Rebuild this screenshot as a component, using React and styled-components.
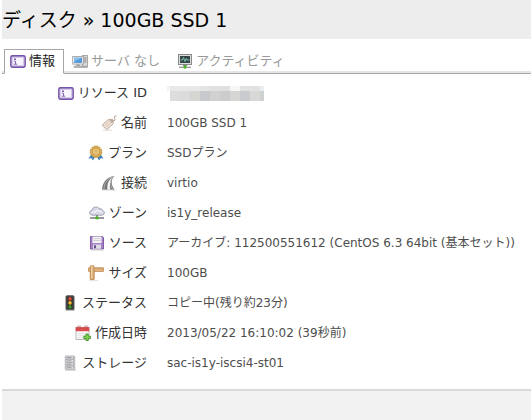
import React, { useState } from "react";
import styled, { createGlobalStyle } from "styled-components";

const GlobalStyle = createGlobalStyle`
    body {
        margin: 0;
        background: #ffffff;
        color: #333333;
        font-family: "DejaVu Sans", "Noto Sans CJK JP", sans-serif;
        font-size: 13px;
        line-height: 20px;
    }
`;

const Page = styled.div`
    display: flex;
    flex-direction: column;
    min-height: 100vh;
    padding-left: 2px;
    box-sizing: border-box;
`;

const Header = styled.header`
    padding: 5px 0 4px;
    background: #ededed;
`;

const Title = styled.h1`
    margin: 0;
    color: #000000;
    font-size: 19px;
    font-weight: 400;
    line-height: 30px;
`;

const TabBar = styled.div`
    display: flex;
    margin-top: 10px;
    padding-left: 2px;
    border-bottom: 1px solid #a6a6a6;
    box-shadow: inset 0 -2px 0 #e6e6e6;
`;

const Tab = styled.button`
    display: flex;
    align-items: center;
    gap: 3px;
    height: 25px;
    margin-bottom: -1px;
    padding: 0 8px 1px 5px;
    border: 1px solid ${({ $active }) => ($active ? "#a6a6a6" : "transparent")};
    border-bottom-color: ${({ $active }) => ($active ? "#ffffff" : "transparent")};
    background: ${({ $active }) => ($active ? "#ffffff" : "transparent")};
    color: ${({ $active }) => ($active ? "#222222" : "#999999")};
    font: inherit;
    cursor: pointer;

    & + & {
        margin-left: 2px;
    }
`;

const Details = styled.table`
    width: 100%;
    margin-top: 4px;
    border-collapse: collapse;
`;

const Label = styled.th`
    width: 145px;
    height: 30px;
    padding: 0;
    font-weight: 400;
`;

const LabelContent = styled.div`
    display: flex;
    align-items: center;
    justify-content: flex-end;
    gap: 4px;
    white-space: nowrap;
`;

const Value = styled.td`
    height: 30px;
    padding: 0 0 0 20px;
    color: #4d4d4d;
    font-size: 12px;
    white-space: nowrap;
`;

const Mosaic = styled.svg`
    display: block;
`;

const Footer = styled.footer`
    flex: 1;
    margin-top: 11px;
    border-top: 2px solid #d9d9d9;
    background: #f2f2f2;
`;

const IconSvg = styled.svg`
    flex: none;
    width: 16px;
    height: 16px;
`;

const Icon = ({ children }) => (
    <IconSvg viewBox="0 0 16 16" aria-hidden="true">
        {children}
    </IconSvg>
);

const InfoIcon = () => (
    <Icon>
        <rect x=".9" y="2.9" width="14.2" height="11.2" rx="1.5" fill="#f7f5fb" stroke="#7453a8" strokeWidth="1.6" />
        <rect x="2.2" y="4.2" width="11.6" height="8.6" rx=".5" fill="none" stroke="#b9a6da" strokeWidth=".8" />
        <circle cx="5" cy="6.2" r=".9" fill="#65429b" />
        <path d="M3.8 8.2h1.7v3M3.8 11.2h3.4" fill="none" stroke="#7d5fb0" strokeWidth=".9" />
    </Icon>
);

const ServerIcon = () => (
    <Icon>
        <rect x="10.5" y="2.5" width="5" height="11.5" fill="#d9d9d9" stroke="#999999" strokeWidth=".8" />
        <path d="M11.5 5h3M11.5 7h3M11.5 9h3" stroke="#777777" strokeWidth=".8" />
        <rect x=".7" y="3.5" width="10.6" height="7.6" fill="#eeeeee" stroke="#999999" strokeWidth=".8" />
        <rect x="2" y="4.7" width="8" height="5.2" fill="#5299dc" />
        <path d="M2 4.7h8l-8 4z" fill="#88bdea" />
        <path d="M4.5 11.4h3.2v1.5H4.5z" fill="#999999" />
        <path d="M2 13h8v1.4H2zM11 13h4v1.5h-4z" fill="#c2c2c2" stroke="#888888" strokeWidth=".5" />
    </Icon>
);

const ActivityIcon = () => (
    <Icon>
        <rect x="1.5" y="1.5" width="13" height="10" fill="#dddddd" stroke="#8a8a8a" />
        <rect x="3" y="3" width="10" height="7" fill="#34464a" />
        <path d="M3.5 7h2L6.5 4.5 8 8.5 9.2 5.5 10 7h2.5" fill="none" stroke="#83cdb1" strokeWidth=".9" />
        <path d="M6 12h4v1H6z" fill="#888888" />
        <path d="M2 14.2h12" stroke="#777777" />
        <path d="M8 12v3" stroke="#3d9a20" strokeWidth="1.4" />
        <circle cx="8" cy="14.2" r="1.6" fill="#50b52b" />
    </Icon>
);

const TagIcon = () => (
    <Icon>
        <path d="M2 15.2h9" stroke="#dddddd" />
        <path d="M1 10.2 7.2 4.5l4.6-.2.5 4.4-6.4 6z" fill="#ecdfd3" stroke="#b39f90" strokeWidth=".8" strokeLinejoin="round" />
        <circle cx="10" cy="6.3" r="1.1" fill="#ffffff" stroke="#a48d7e" strokeWidth=".7" />
        <path d="M10.3 6c2.8.4 4.5-.8 3.5-2.2C12.4 1.8 14 .2 15.4 1.2" fill="none" stroke="#a79488" />
        <path d="m4 10.5 3.5-3.4M5.5 12 9 8.6" stroke="#cebbad" strokeWidth=".6" />
    </Icon>
);

const MedalIcon = () => (
    <Icon>
        <path d="m3.5 9-3 4.5 2.8-.2L5 15.5l2.5-4.8zM12.5 9l3 4.5-2.8-.2-1.7 2.2-2.5-4.8z" fill="#4385bd" />
        <circle cx="8" cy="6.8" r="5.8" fill="#dcae55" stroke="#a87a2d" strokeWidth=".8" strokeDasharray="2 .7" />
        <circle cx="8" cy="6.8" r="3.6" fill="#f1d58d" stroke="#b78a3a" strokeWidth=".8" />
        <path d="M6.5 5.3h3M6 6.8h4M6.5 8.3h3" stroke="#c8984a" strokeWidth=".7" />
    </Icon>
);

const RoadIcon = () => (
    <Icon>
        <path d="M1 14.7C1.5 7 6 2 13.5 1 10 4.5 9.6 9 13.5 14.7z" fill="#777777" />
        <path d="M2.8 14.5C3.2 8 6.6 3.6 12 1.5M11.8 14.5C8.5 9 9 4.6 12 1.7" fill="none" stroke="#c4c4c4" strokeWidth=".7" />
        <path d="M6.5 14.7c-.5-5 .6-9.4 4.5-12.3-2.2 3.4-2.6 7.7-1.6 12.3z" fill="#f4f4f4" />
        <path d="M1 15.2h14" stroke="#d8d8d8" strokeWidth=".7" />
    </Icon>
);

const CloudIcon = () => (
    <Icon>
        <path d="M4 10.2C-.5 10.2-.2 5.6 3 5.4 3.3 1.5 9 .8 10.4 4c2-.7 3.2.3 3.1 1.7 3 .8 2 4.5-.7 4.5z" fill="#d8daea" stroke="#888a9e" strokeWidth=".8" />
        <path d="M3 7.3c1-.8 2.4-.4 3 .3C6.8 5.5 9 5 10.5 6.8c1-.5 2-.2 2.8.5" fill="none" stroke="#ffffff" />
        <path d="M1 13h14" stroke="#555555" strokeWidth="1.2" />
        <path d="M8 10v3" stroke="#777777" strokeWidth="1.5" />
        <ellipse cx="8" cy="13" rx="2" ry="1.4" fill="#4bb728" />
    </Icon>
);

const FloppyIcon = () => (
    <Icon>
        <path d="M1.5 1.5h12l1 1v11.5h-13z" fill="#a583c6" stroke="#765198" strokeWidth=".9" />
        <rect x="3.5" y="1.5" width="9" height="6.5" fill="#f4f3f6" />
        <path d="M4.3 3.6h7.4M4.3 5.6h7.4" stroke="#c6c1cc" strokeWidth=".8" />
        <rect x="4" y="9.5" width="8" height="4.3" fill="#dedbe3" />
        <path d="M5 10.2h2v3H5z" fill="#66508a" />
        <path d="M1 15.2h14" stroke="#dddddd" />
    </Icon>
);

const RulerIcon = () => (
    <Icon>
        <path d="M.6 2.8h14.8v3.6H6v8.1H2.4V6.4H.6z" fill="#eabd87" stroke="#b98449" strokeWidth=".8" />
        <path d="M2.4.8h3.6v13.4H2.4z" fill="#f1ce9f" stroke="#b98449" strokeWidth=".8" />
        <path d="M8 3.2v1.5M10 3.2v1.5M12 3.2v1.5M14 3.2v1.5M5.8 9H4.3M5.8 11H4.3M5.8 13H4.3M5.8 7H4.3M5.8 5H4.3M5.8 3H4.3" stroke="#a87640" strokeWidth=".6" />
        <path d="M1 15.4h9" stroke="#e0d8d0" strokeWidth=".8" />
    </Icon>
);

const SignalIcon = () => (
    <Icon>
        <rect x="4" y=".8" width="8" height="14" rx="1" fill="#5a5a5a" stroke="#333333" strokeWidth=".8" />
        <rect x="5.4" y="1.8" width="5.2" height="12" fill="#292929" />
        <circle cx="8" cy="3.9" r="1.8" fill="#df4937" />
        <circle cx="8" cy="7.9" r="1.8" fill="#f0b72f" />
        <circle cx="8" cy="11.9" r="1.8" fill="#3b902b" />
        <path d="M3 15.4h10" stroke="#bbbbbb" strokeWidth=".8" />
    </Icon>
);

const CalendarIcon = () => (
    <Icon>
        <rect x="1" y="2.5" width="13" height="12" fill="#f5f5f5" stroke="#aaaaaa" strokeWidth=".8" />
        <path d="M.7 2.2h13.6v4H.7z" fill="#d94d4d" />
        <path d="M3 .5v3M5 .5v3M10 .5v3M12 .5v3" stroke="#b04a4a" strokeWidth=".8" />
        <path d="M3 8.5h8M3 10.5h8M3 12.5h6" stroke="#dedede" strokeWidth=".6" />
        <path d="M11 9h2.2v2.2h2.3v2.2h-2.3v2.3H11v-2.3H8.8v-2.2H11z" fill="#84d457" stroke="#368b22" strokeWidth=".8" />
    </Icon>
);

const StorageIcon = () => (
    <Icon>
        <path d="M3 15h11" stroke="#bbbbbb" />
        {[1, 4.4, 7.8, 11.2].map((y) => (
            <g key={y}>
                <rect x="3.2" y={y} width="9.6" height="3" rx=".6" fill="#e4e4e7" stroke="#9a9a9e" strokeWidth=".7" />
                <path d={`M4.5 ${y + 1.5}h5M11 ${y + 1.5}h1`} stroke="#88888e" strokeWidth=".8" />
            </g>
        ))}
    </Icon>
);

const topBlocks = ["#e8e8e8", "#e8e8e8", "#e8e8e8", "#e4e4e4", "#e0e0e0", "#e0e0e0", "#f7f7f7", "#e2e2e2", "#e2e2e2", "#e9eef3"];
const blocks = ["#dcdedd", "#dbdbdb", "#d5d5d1", "#c7c9cd", "#d1d1d1", "#cccccc", "#d5d5d3", "#c9cbce", "#d8d8d6", "#cfd1d3"];

const HiddenId = () => (
    <Mosaic width="97" height="15" role="img" aria-label="リソース ID">
        <rect x="0" y="0" width="3" height="5" fill="#f4f4f4" />
        {topBlocks.map((fill, i) => (
            <rect key={i} x={i * 10 + 3} y="0" width="10" height="5" fill={fill} />
        ))}
        {blocks.map((fill, i) => (
            <rect key={i} x={i * 10 + 3} y="5" width="10" height="10" fill={fill} />
        ))}
    </Mosaic>
);

const tabs = [
    { name: "情報", icon: InfoIcon },
    { name: "サーバ なし", icon: ServerIcon },
    { name: "アクティビティ", icon: ActivityIcon },
];

const rows = [
    { label: "リソース ID", icon: InfoIcon, value: <HiddenId /> },
    { label: "名前", icon: TagIcon, value: "100GB SSD 1" },
    { label: "プラン", icon: MedalIcon, value: "SSDプラン" },
    { label: "接続", icon: RoadIcon, value: "virtio" },
    { label: "ゾーン", icon: CloudIcon, value: "is1y_release" },
    { label: "ソース", icon: FloppyIcon, value: "アーカイブ: 112500551612 (CentOS 6.3 64bit (基本セット))" },
    { label: "サイズ", icon: RulerIcon, value: "100GB" },
    { label: "ステータス", icon: SignalIcon, value: "コピー中(残り約23分)" },
    { label: "作成日時", icon: CalendarIcon, value: "2013/05/22 16:10:02 (39秒前)" },
    { label: "ストレージ", icon: StorageIcon, value: "sac-is1y-iscsi4-st01" },
];

const App = () => {
    const [active, setActive] = useState(0);

    return (
        <Page>
            <GlobalStyle />
            <Header>
                <Title>ディスク » 100GB SSD 1</Title>
            </Header>
            <TabBar role="tablist">
                {tabs.map(({ name, icon: TabIcon }, i) => (
                    <Tab
                        key={name}
                        type="button"
                        role="tab"
                        aria-selected={i === active}
                        $active={i === active}
                        onClick={() => setActive(i)}
                    >
                        <TabIcon />
                        {name}
                    </Tab>
                ))}
            </TabBar>
            <Details>
                <tbody>
                    {rows.map(({ label, icon: RowIcon, value }) => (
                        <tr key={label}>
                            <Label scope="row">
                                <LabelContent>
                                    <RowIcon />
                                    {label}
                                </LabelContent>
                            </Label>
                            <Value>{value}</Value>
                        </tr>
                    ))}
                </tbody>
            </Details>
            <Footer />
        </Page>
    );
};

export default App;
